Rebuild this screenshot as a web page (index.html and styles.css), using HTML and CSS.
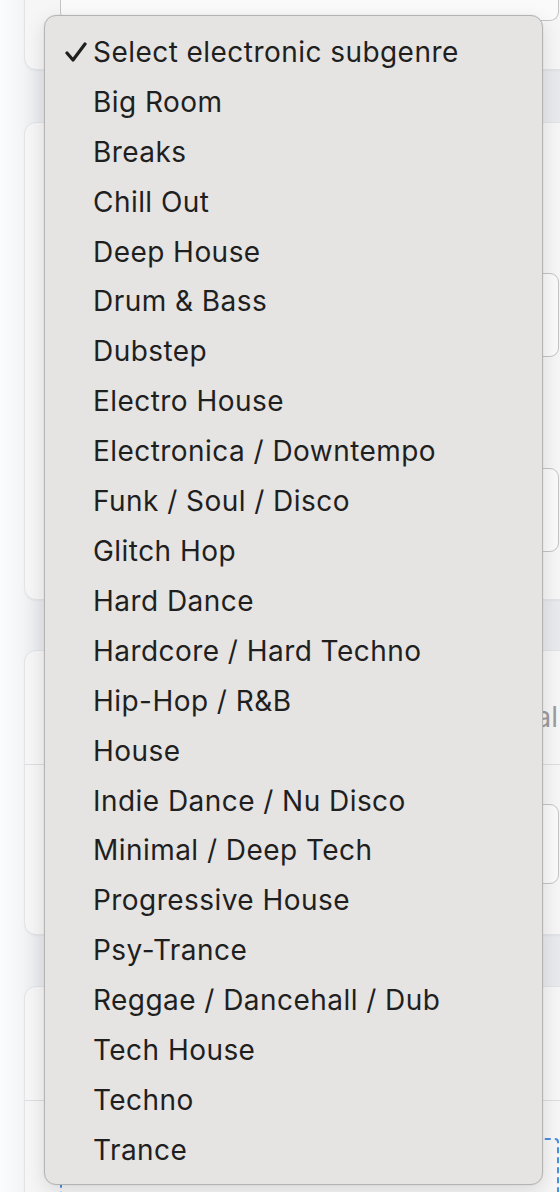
FILE: index.html
```html
<!DOCTYPE html>
<html lang="en">
<head>
<meta charset="utf-8">
<title>Select electronic subgenre</title>
<link rel="stylesheet" href="styles.css">
</head>
<body>
<div class="page">
  <section class="card card-first">
    <div class="field field-top"></div>
  </section>

  <section class="card card-second">
    <div class="field field-a"></div>
    <div class="field field-b"></div>
  </section>

  <section class="card card-third">
    <div class="card-head">
      <span class="placeholder">Optional</span>
    </div>
    <div class="card-body">
      <div class="field field-c"></div>
    </div>
  </section>

  <section class="card card-fourth">
    <div class="card-head short"></div>
    <div class="dropzone"></div>
  </section>
</div>

<div class="menu" role="listbox">
  <div class="option selected">
    <span class="check"><svg width="22" height="20" viewBox="0 0 22 20"><polyline points="2,11 8,18 20,2" fill="none" stroke="#1f1f1f" stroke-width="3.2" stroke-linecap="round" stroke-linejoin="round"/></svg></span>
    <span class="label">Select electronic subgenre</span>
  </div>
  <div class="option"><span class="check"></span><span class="label">Big Room</span></div>
  <div class="option"><span class="check"></span><span class="label">Breaks</span></div>
  <div class="option"><span class="check"></span><span class="label">Chill Out</span></div>
  <div class="option"><span class="check"></span><span class="label">Deep House</span></div>
  <div class="option"><span class="check"></span><span class="label">Drum &amp; Bass</span></div>
  <div class="option"><span class="check"></span><span class="label">Dubstep</span></div>
  <div class="option"><span class="check"></span><span class="label">Electro House</span></div>
  <div class="option"><span class="check"></span><span class="label">Electronica / Downtempo</span></div>
  <div class="option"><span class="check"></span><span class="label">Funk / Soul / Disco</span></div>
  <div class="option"><span class="check"></span><span class="label">Glitch Hop</span></div>
  <div class="option"><span class="check"></span><span class="label">Hard Dance</span></div>
  <div class="option"><span class="check"></span><span class="label">Hardcore / Hard Techno</span></div>
  <div class="option"><span class="check"></span><span class="label">Hip-Hop / R&amp;B</span></div>
  <div class="option"><span class="check"></span><span class="label">House</span></div>
  <div class="option"><span class="check"></span><span class="label">Indie Dance / Nu Disco</span></div>
  <div class="option"><span class="check"></span><span class="label">Minimal / Deep Tech</span></div>
  <div class="option"><span class="check"></span><span class="label">Progressive House</span></div>
  <div class="option"><span class="check"></span><span class="label">Psy-Trance</span></div>
  <div class="option"><span class="check"></span><span class="label">Reggae / Dancehall / Dub</span></div>
  <div class="option"><span class="check"></span><span class="label">Tech House</span></div>
  <div class="option"><span class="check"></span><span class="label">Techno</span></div>
  <div class="option"><span class="check"></span><span class="label">Trance</span></div>
</div>
</body>
</html>
```
FILE: styles.css
```css
html, body {
  margin: 0;
  padding: 0;
}

body {
  width: 560px;
  height: 1192px;
  overflow: hidden;
  background: linear-gradient(to right, #fbfcfd 0px, #f4f5f7 20px, #e9ebee 40px, #e8eaed 100%);
  font-family: Inter, "Liberation Sans", Arial, sans-serif;
  position: relative;
}

.page {
  display: flex;
  flex-direction: column;
  padding-left: 24px;
  width: 570px;
}

.card {
  flex: none;
  background: #f6f6f7;
  border: 1px solid #e2e3e6;
  border-radius: 12px;
  box-sizing: border-box;
  box-shadow: 0 1px 2px rgba(0, 0, 0, 0.04);
}

.card-first {
  margin-top: -40px;
  height: 110px;
  padding: 0 34px 0 35px;
}

.card-second {
  margin-top: 52px;
  height: 478px;
  padding: 150px 34px 0 35px;
  display: flex;
  flex-direction: column;
  gap: 111px;
}

.card-third {
  margin-top: 50px;
  height: 285px;
  display: flex;
  flex-direction: column;
}

.card-fourth {
  margin-top: 51px;
  height: 320px;
  display: flex;
  flex-direction: column;
}

.field {
  flex: none;
  border: 1.5px solid #c4c4c6;
  border-radius: 9px;
  background: #fafafa;
  box-sizing: border-box;
}

.field-top {
  height: 60px;
  border-top: none;
  border-top-left-radius: 0;
  border-top-right-radius: 0;
}

.field-a,
.field-b {
  height: 84px;
}

.card-head {
  flex: none;
  height: 114px;
  border-bottom: 1.5px solid #dcdde0;
  display: flex;
  align-items: flex-start;
  justify-content: flex-end;
  padding: 49px 35px 0 0;
  box-sizing: border-box;
}

.card-head.short {
  height: 114px;
  padding: 0;
}

.placeholder {
  font-size: 28px;
  line-height: 34px;
  color: #9b9b9e;
}

.card-body {
  padding: 39px 34px 0 35px;
}

.field-c {
  height: 80px;
}

.dropzone {
  flex: none;
  margin: 37px 34px 0 35px;
  height: 120px;
  border: 2px dashed #4a8fe0;
  border-radius: 4px;
}

.menu {
  position: absolute;
  left: 44px;
  top: 15px;
  width: 499px;
  height: 1170px;
  box-sizing: border-box;
  padding: 11px 0 9px;
  background: #e5e4e2;
  border: 1px solid #b4b4b4;
  border-radius: 12px;
  box-shadow: 0 6px 20px rgba(0, 0, 0, 0.12), 0 0 0 0.5px rgba(0, 0, 0, 0.05);
  display: flex;
  flex-direction: column;
}

.option {
  height: 50px;
  display: flex;
  align-items: center;
  font-size: 28px;
  letter-spacing: 0.45px;
  color: #1f1f1f;
  white-space: nowrap;
}

.check {
  width: 48px;
  flex: none;
  display: flex;
  padding-left: 20px;
  box-sizing: border-box;
}

.check svg {
  display: block;
}
```
